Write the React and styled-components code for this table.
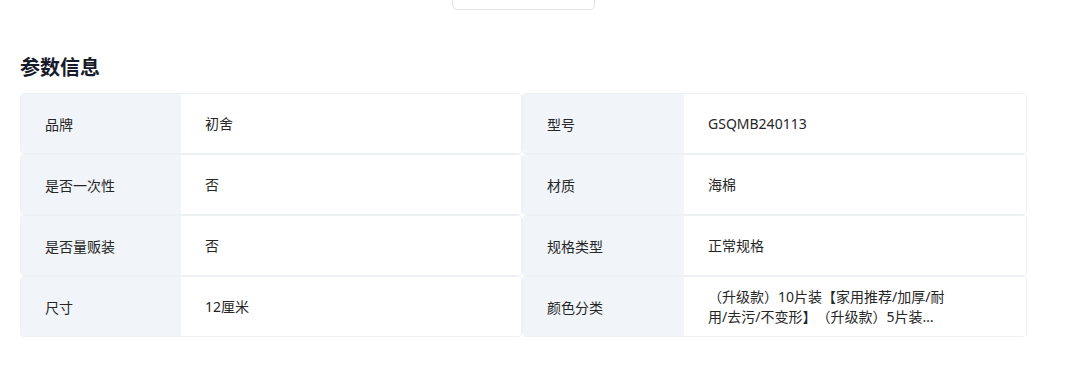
import React from "react";
import styled, { createGlobalStyle } from "styled-components";

const GlobalStyle = createGlobalStyle`
  body {
    margin: 0;
    background: #ffffff;
    font-family: "Noto Sans", "Noto Sans CJK SC", sans-serif;
  }
`;

const Page = styled.div`
  width: 1007px;
  padding-left: 20px;
`;

const MoreButton = styled.div`
  width: 141px;
  height: 36px;
  margin: -28px auto 0;
  border: 1px solid #e2e2e2;
  border-radius: 5px;
  background: #fff;
`;

const Title = styled.h2`
  margin: 43px 0 12px;
  font-size: 20px;
  line-height: 28px;
  font-weight: 700;
  color: #161a2b;
  font-family: "Noto Sans CJK SC", sans-serif;
`;

const Grid = styled.div`
  display: grid;
  grid-template-columns: 502px 505px;
  grid-auto-rows: 61px;
`;

const Item = styled.div`
  display: flex;
  border: 1px solid #eef1f4;
  border-radius: 4px;
  overflow: hidden;
`;

const Label = styled.div`
  width: ${(p) => p.$w}px;
  flex-shrink: 0;
  display: flex;
  align-items: center;
  padding-left: 24px;
  box-sizing: border-box;
  background: #f1f5f9;
  font-size: 14px;
  color: #262626;
  font-family: "Noto Sans CJK SC", sans-serif;
`;

const Value = styled.div`
  flex: 1;
  display: flex;
  align-items: center;
  padding: 0 24px;
  background: #fff;
  font-size: 14px;
  color: #262626;
  font-family: "Noto Sans", "Noto Sans CJK SC", sans-serif;
`;

const Clamp = styled.span`
  max-width: 242px;
  line-height: 20px;
  display: -webkit-box;
  -webkit-line-clamp: 2;
  -webkit-box-orient: vertical;
  overflow: hidden;
`;

const params = [
  ["品牌", "初舍"],
  ["型号", "GSQMB240113"],
  ["是否一次性", "否"],
  ["材质", "海棉"],
  ["是否量贩装", "否"],
  ["规格类型", "正常规格"],
  ["尺寸", "12厘米"],
  [
    "颜色分类",
    "（升级款）10片装【家用推荐/加厚/耐用/去污/不变形】\u3000（升级款）5片装【家用推荐/加厚/耐用/去污/不变形】",
  ],
];

const App = () => (
  <>
    <GlobalStyle />
    <Page>
      <MoreButton />
      <Title>参数信息</Title>
      <Grid>
        {params.map(([k, v], i) => (
          <Item key={k}>
            <Label $w={i % 2 ? 161 : 160}>{k}</Label>
            <Value>
              <Clamp>{v}</Clamp>
            </Value>
          </Item>
        ))}
      </Grid>
    </Page>
  </>
);

export default App;
